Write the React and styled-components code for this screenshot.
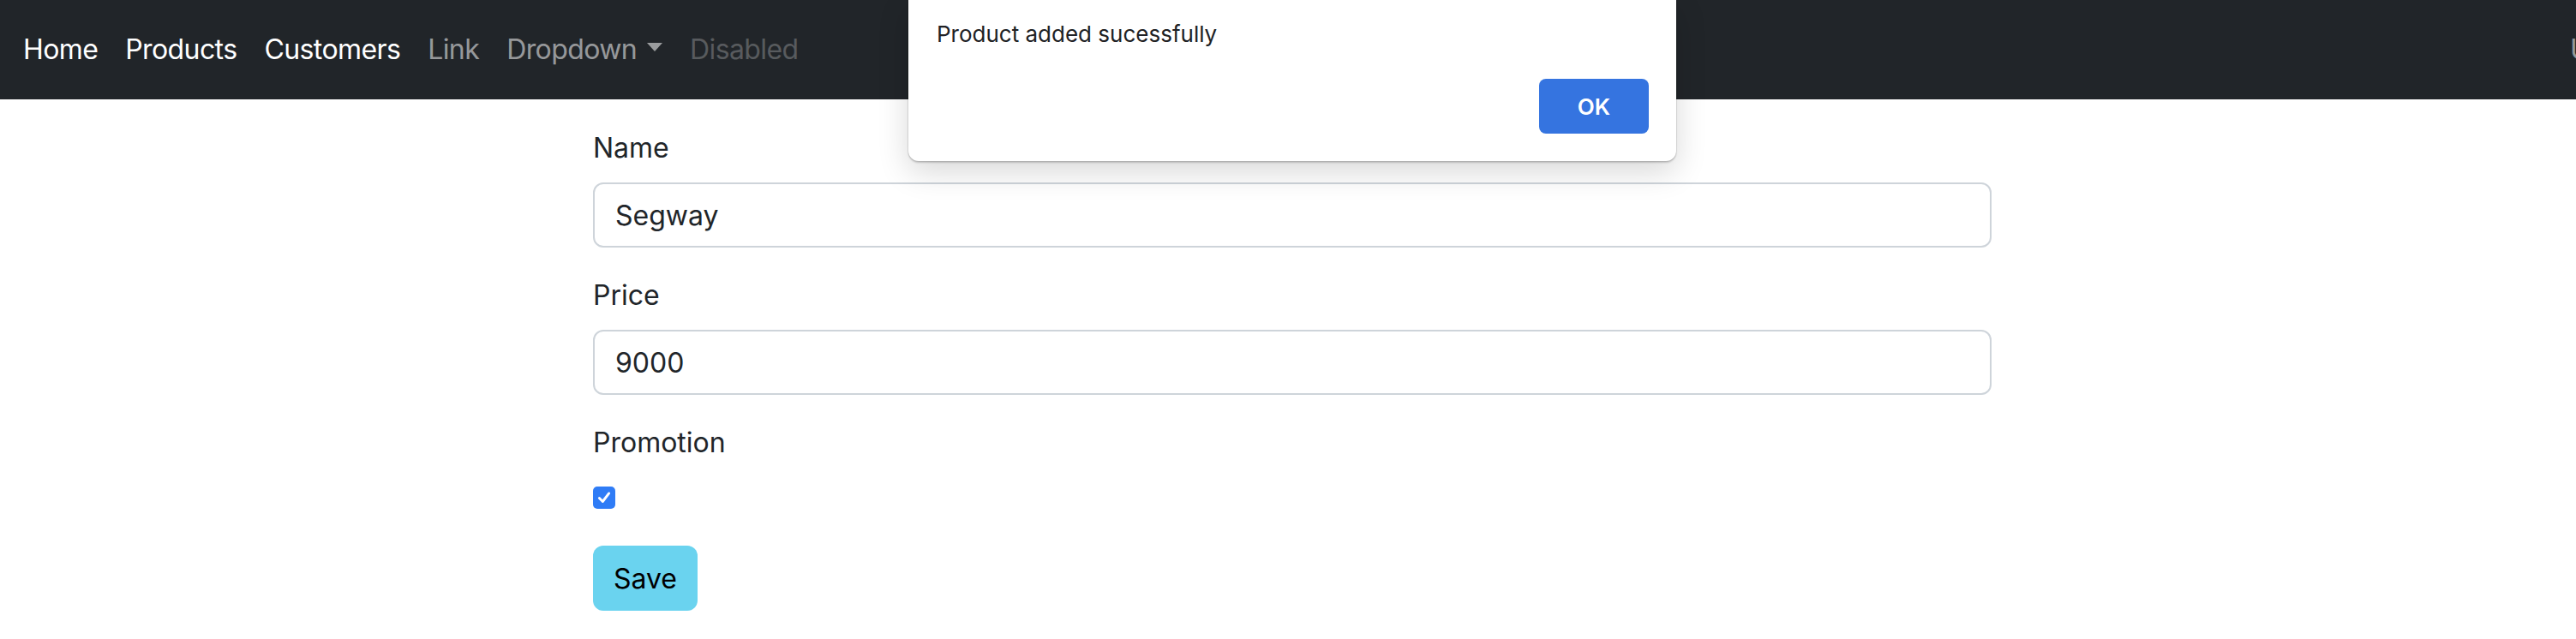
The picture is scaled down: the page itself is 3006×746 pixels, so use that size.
import React from "react";
import styled, { createGlobalStyle } from "styled-components";

const GlobalStyle = createGlobalStyle`
  html, body {
    margin: 0;
    padding: 0;
    background: #ffffff;
    overflow: hidden;
  }
  body {
    font-family: Inter, "Liberation Sans", Arial, sans-serif;
    color: #212529;
  }
  * { box-sizing: border-box; }
`;

//Navbar
const Navbar = styled.nav`
  height: 116px;
  background-color: #212529;
  display: flex;
  align-items: center;
  padding-left: 11px;
  white-space: nowrap;
`;

const NavLink = styled.a`
  font-size: 32px;
  line-height: 48px;
  letter-spacing: -0.6px;
  padding: 0 16px;
  text-decoration: none;
  color: ${({ $tone }) =>
    $tone === "active"
      ? "#ffffff"
      : $tone === "disabled"
      ? "rgba(255,255,255,0.25)"
      : "rgba(255,255,255,0.55)"};

  //caret
  &.dropdown::after {
    content: "";
    display: inline-block;
    margin-left: 12px;
    vertical-align: 9px;
    border-top: 10px solid;
    border-right: 9px solid transparent;
    border-left: 9px solid transparent;
  }
`;

const NavRight = styled.a`
  margin-left: auto;
  margin-right: -110px;
  font-size: 32px;
  line-height: 48px;
  color: rgba(255, 255, 255, 0.55);
  width: 117px;
`;

//Form
const FormWrapper = styled.form`
  width: 1632px;
  margin-left: 692px;
  padding-top: 33px;
`;

const FormGroup = styled.div`
  margin-bottom: 32px;
`;

const Label = styled.label`
  display: block;
  font-size: 32px;
  line-height: 48px;
  margin-bottom: 16px;
  color: #212529;
`;

const Input = styled.input`
  display: block;
  width: 100%;
  height: 76px;
  padding: 0 24px;
  font-family: inherit;
  font-size: 32px;
  color: #212529;
  border: 2px solid #ced4da;
  border-radius: 12px;
  outline: none;
  background: #fff;
`;

const CheckRow = styled.div`
  height: 48px;
  display: flex;
  align-items: center;
`;

const CheckBox = styled.span`
  width: 26px;
  height: 26px;
  border-radius: 5px;
  background-color: #2f7cf6;
  display: flex;
  align-items: center;
  justify-content: center;

  svg {
    width: 18px;
    height: 18px;
  }
`;

const SaveButton = styled.button`
  width: 122px;
  height: 76px;
  border: none;
  border-radius: 12px;
  background-color: #6ad3ef;
  color: #000;
  font-family: inherit;
  font-size: 32px;
  padding: 0;
`;

/****
 * Alert dialog
 */
const Dialog = styled.div`
  position: absolute;
  top: 0;
  left: 1060px;
  width: 896px;
  height: 188px;
  background: #fff;
  border-radius: 0 0 12px 12px;
  box-shadow: 0 0 0 1px rgba(0, 0, 0, 0.06), 0 2px 2px rgba(0, 0, 0, 0.18),
    0 12px 36px rgba(0, 0, 0, 0.16);
  padding: 22px 32px 32px 33px;
  display: flex;
  flex-direction: column;
  justify-content: space-between;
`;

const DialogText = styled.p`
  margin: 0;
  font-size: 26px;
  line-height: 36px;
  color: #202124;
`;

const DialogActions = styled.div`
  display: flex;
  justify-content: flex-end;
`;

const OkButton = styled.button`
  width: 128px;
  height: 64px;
  border: none;
  border-radius: 8px;
  background-color: #3574e0;
  color: #fff;
  font-family: inherit;
  font-size: 26px;
  font-weight: 600;
`;

export default function App() {
  return (
    <>
      <GlobalStyle />
      <Navbar>
        <NavLink $tone="active">Home</NavLink>
        <NavLink $tone="active">Products</NavLink>
        <NavLink $tone="active">Customers</NavLink>
        <NavLink>Link</NavLink>
        <NavLink className="dropdown">Dropdown</NavLink>
        <NavLink $tone="disabled">Disabled</NavLink>
        <NavRight>User</NavRight>
      </Navbar>

      <FormWrapper>
        <FormGroup>
          <Label>Name</Label>
          <Input defaultValue="Segway" />
        </FormGroup>
        <FormGroup>
          <Label>Price</Label>
          <Input defaultValue="9000" />
        </FormGroup>
        <FormGroup>
          <Label>Promotion</Label>
          <CheckRow>
            <CheckBox>
              <svg viewBox="0 0 16 16" fill="none">
                <path
                  d="M3 8.5 L6.5 12 L13 3.5"
                  stroke="#fff"
                  strokeWidth="2.6"
                  strokeLinecap="round"
                  strokeLinejoin="round"
                />
              </svg>
            </CheckBox>
          </CheckRow>
        </FormGroup>
        <SaveButton type="button">Save</SaveButton>
      </FormWrapper>

      <Dialog>
        <DialogText>Product added sucessfully</DialogText>
        <DialogActions>
          <OkButton>OK</OkButton>
        </DialogActions>
      </Dialog>
    </>
  );
}
